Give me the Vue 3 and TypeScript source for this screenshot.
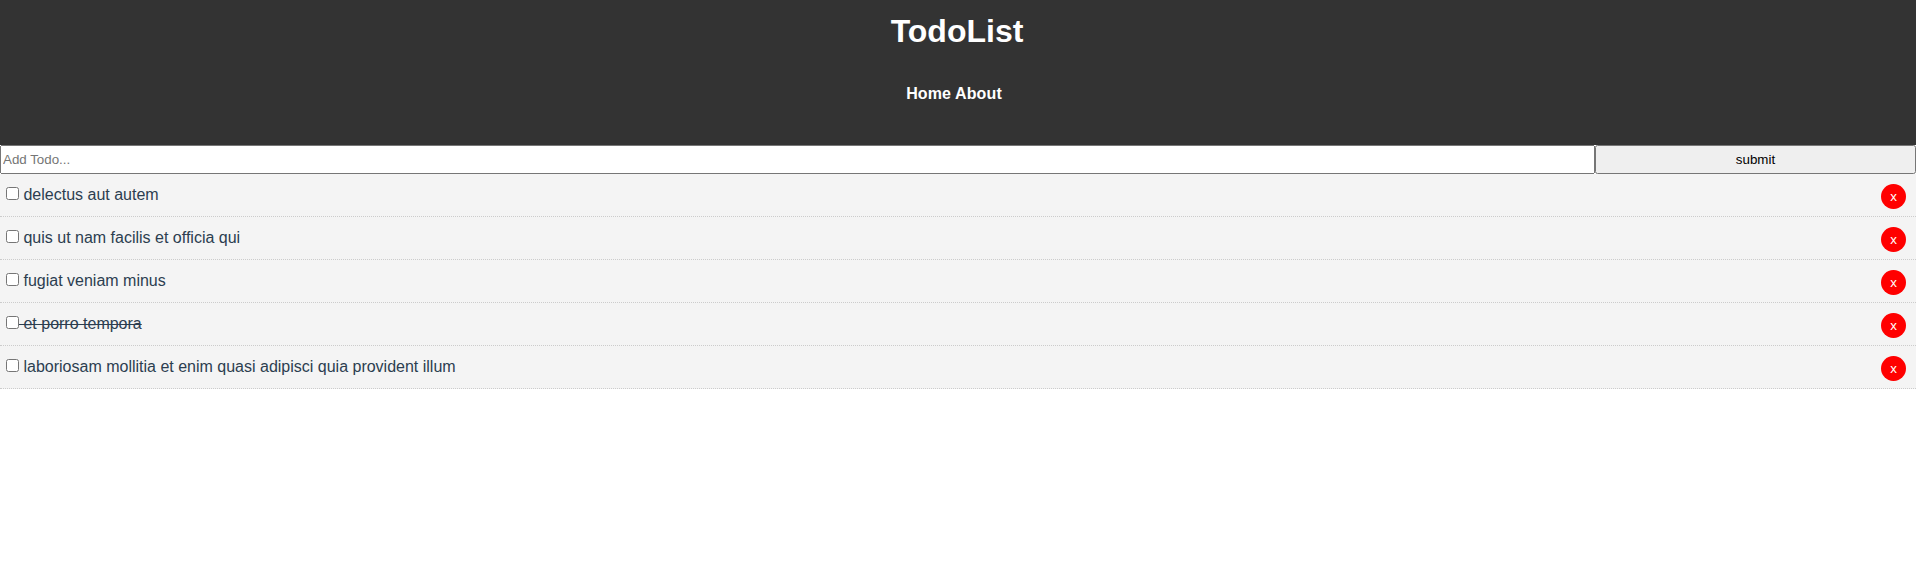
<script setup lang="ts">
import { ref } from 'vue'

interface Todo {
  id: number
  title: string
  completed: boolean
}

const newTitle = ref('')
const todos = ref<Todo[]>([
  { id: 1, title: 'delectus aut autem', completed: false },
  { id: 2, title: 'quis ut nam facilis et officia qui', completed: false },
  { id: 3, title: 'fugiat veniam minus', completed: false },
  { id: 4, title: 'et porro tempora', completed: true },
  { id: 5, title: 'laboriosam mollitia et enim quasi adipisci quia provident illum', completed: false },
])

function addTodo() {
  if (!newTitle.value) return
  todos.value.push({ id: Date.now(), title: newTitle.value, completed: false })
  newTitle.value = ''
}

function removeTodo(id: number) {
  todos.value = todos.value.filter((t) => t.id !== id)
}
</script>

<template>
  <div class="app">
    <header class="header">
      <h1>TodoList</h1>
      <nav class="nav"><a>Home</a> <a>About</a></nav>
    </header>
    <form class="add" @submit.prevent="addTodo">
      <input v-model="newTitle" type="text" placeholder="Add Todo..." />
      <button type="submit" class="btn">submit</button>
    </form>
    <div v-for="todo in todos" :key="todo.id" class="todo" :class="{ done: todo.completed }">
      <p>
        <input type="checkbox" @change="todo.completed = !todo.completed" />
        {{ todo.title }}
        <button class="del" @click="removeTodo(todo.id)">x</button>
      </p>
    </div>
  </div>
</template>

<style>
body {
  margin: 0;
  background: #fff;
}
</style>

<style scoped>
.app {
  font-family: "Liberation Sans", Arial, sans-serif;
  font-size: 16px;
  line-height: 1.4;
  color: #2c3e50;
}
.header {
  box-sizing: border-box;
  height: 145px;
  padding: 10px;
  background: #333;
  color: #fff;
  text-align: center;
}
h1 {
  margin: 0;
  padding-right: 2px;
  font-size: 32px;
  line-height: 42px;
}
.nav {
  padding: 31px 8px 29px 0;
  font-weight: bold;
  letter-spacing: 0.12px;
}
.add {
  display: flex;
  height: 29px;
}
.add input {
  flex: 1;
  box-sizing: border-box;
  min-width: 0;
  padding: 5px 1px;
  font: 13.333px "Liberation Sans", Arial, sans-serif;
}
.btn {
  flex: 0 0 321px;
  box-sizing: border-box;
  padding: 1px 6px;
  font: 13.333px "Liberation Sans", Arial, sans-serif;
}
.todo {
  box-sizing: border-box;
  height: 43px;
  padding: 10px 10px 10px 6px;
  background: #f4f4f4;
  border-bottom: 1px dotted #ccc;
}
.todo p {
  margin: 0;
}
.todo input {
  margin: 3px 0;
}
.done {
  text-decoration: line-through;
}
.del {
  float: right;
  padding: 5px 9px;
  border: none;
  border-radius: 50%;
  background: #f00;
  color: #fff;
  font: 13.333px "Liberation Sans", Arial, sans-serif;
}
</style>
